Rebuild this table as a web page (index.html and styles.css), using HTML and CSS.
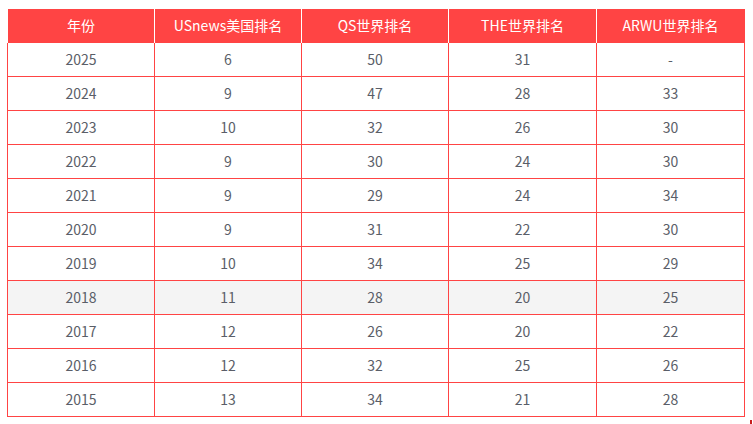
FILE: index.html
```html
<!DOCTYPE html>
<html lang="zh">
<head>
<meta charset="utf-8">
<title>排名</title>
<link rel="stylesheet" href="styles.css">
</head>
<body>
<div class="table">
  <div class="head">
    <div class="th">年份</div>
    <div class="th">USnews美国排名</div>
    <div class="th">QS世界排名</div>
    <div class="th">THE世界排名</div>
    <div class="th">ARWU世界排名</div>
  </div>
  <div class="row"><div class="td">2025</div><div class="td">6</div><div class="td">50</div><div class="td">31</div><div class="td">-</div></div>
  <div class="row"><div class="td">2024</div><div class="td">9</div><div class="td">47</div><div class="td">28</div><div class="td">33</div></div>
  <div class="row"><div class="td">2023</div><div class="td">10</div><div class="td">32</div><div class="td">26</div><div class="td">30</div></div>
  <div class="row"><div class="td">2022</div><div class="td">9</div><div class="td">30</div><div class="td">24</div><div class="td">30</div></div>
  <div class="row"><div class="td">2021</div><div class="td">9</div><div class="td">29</div><div class="td">24</div><div class="td">34</div></div>
  <div class="row"><div class="td">2020</div><div class="td">9</div><div class="td">31</div><div class="td">22</div><div class="td">30</div></div>
  <div class="row"><div class="td">2019</div><div class="td">10</div><div class="td">34</div><div class="td">25</div><div class="td">29</div></div>
  <div class="row hl"><div class="td">2018</div><div class="td">11</div><div class="td">28</div><div class="td">20</div><div class="td">25</div></div>
  <div class="row"><div class="td">2017</div><div class="td">12</div><div class="td">26</div><div class="td">20</div><div class="td">22</div></div>
  <div class="row"><div class="td">2016</div><div class="td">12</div><div class="td">32</div><div class="td">25</div><div class="td">26</div></div>
  <div class="row"><div class="td">2015</div><div class="td">13</div><div class="td">34</div><div class="td">21</div><div class="td">28</div></div>
</div>
<span class="mark"></span>
</body>
</html>
```
FILE: styles.css
```css
html, body {
  margin: 0;
  padding: 0;
  background: #ffffff;
}
body {
  position: relative;
  width: 753px;
  height: 424px;
  overflow: hidden;
  font-family: "Noto Sans CJK SC", "Noto Sans", sans-serif;
  font-size: 14px;
}
.table {
  margin: 9px 0 0 7px;
  width: 738px;
}
.head, .row {
  display: grid;
  grid-template-columns: 148px 147px 147px 148px 148px;
}
.head {
  background: #ff4444;
  height: 34px;
}
.th {
  box-sizing: border-box;
  height: 34px;
  padding-bottom: 2px;
  display: flex;
  align-items: center;
  justify-content: center;
  color: #ffffff;
  border-right: 1px solid #ffffff;
}
.th:first-child {
  border-left: 1px solid #ffffff;
}
.th:last-child {
  border-right: 1px solid #ff4444;
}
.td {
  box-sizing: border-box;
  height: 34px;
  padding-bottom: 2px;
  display: flex;
  align-items: center;
  justify-content: center;
  color: #5a5e68;
  border-right: 1px solid #ff4444;
  border-bottom: 1px solid #ff4444;
}
.td:first-child {
  border-left: 1px solid #ff4444;
}
.hl {
  background: #f4f4f4;
}
.mark {
  position: absolute;
  left: 750px;
  top: 420px;
  width: 2px;
  height: 4px;
  background: #c81e1e;
}
```
